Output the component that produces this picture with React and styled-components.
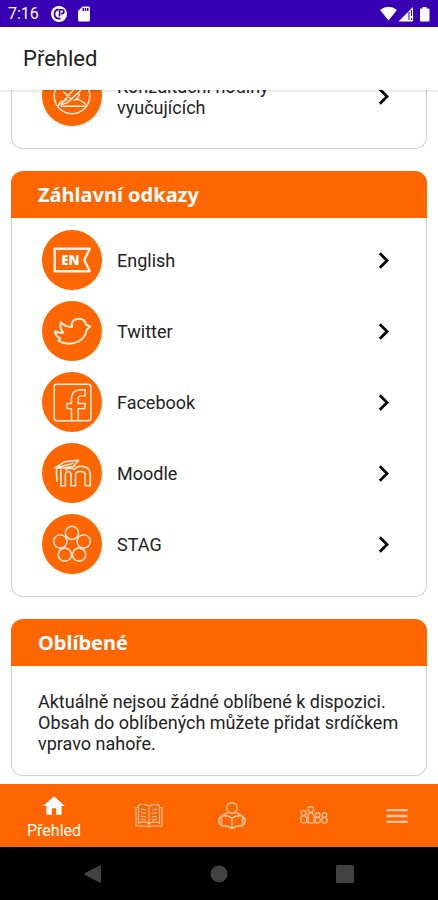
import React, { useState } from 'react';
import styled, { createGlobalStyle } from 'styled-components';

import { MdChevronRight, MdHome, MdSdCard, MdMenu } from 'react-icons/md';

const shortcuts = [
  { id: 'english', label: 'English', Icon: EnglishIcon },
  { id: 'twitter', label: 'Twitter', Icon: TwitterIcon },
  { id: 'facebook', label: 'Facebook', Icon: FacebookIcon },
  { id: 'moodle', label: 'Moodle', Icon: MoodleIcon },
  { id: 'stag', label: 'STAG', Icon: StagIcon },
];

const tabs = [
  { id: 'home', label: 'Přehled', Icon: HomeIcon },
  { id: 'book', Icon: BookIcon },
  { id: 'reader', Icon: ReaderIcon },
  { id: 'people', Icon: PeopleIcon },
  { id: 'menu', Icon: MenuIcon },
];

const LinkRow = ({ id, label, Icon }) => (
  <li>
    <StyledLink href={`#${id}`}>
      <StyledCircle>
        <Icon />
      </StyledCircle>
      <StyledLinkLabel>{label}</StyledLinkLabel>
      <StyledChevron />
    </StyledLink>
  </li>
);

const App = () => {
  const [active, setActive] = useState('home');

  return (
    <StyledScreen>
      <GlobalStyle />

      <StyledStatusBar>
        <StyledTime>7:16</StyledTime>
        <svg width='16' height='16' viewBox='0 0 16 16'>
          <circle cx='8' cy='8' r='8' fill='#fff' />
          <path
            d='M7.5 3.4A4.7 4.7 0 0 0 7.5 12.7A4.7 4.7 0 0 0 9.5 12.4'
            fill='none'
            stroke='#3700b3'
            strokeWidth='1.8'
          />
          <path
            d='M8.6 10.5V3.8H11A1.9 1.9 0 0 1 11 7.6H10'
            fill='none'
            stroke='#3700b3'
            strokeWidth='1.6'
          />
        </svg>
        <StyledSdCard />
        <StyledSignals width='50' height='16' viewBox='0 0 50 16'>
          <path d='M0 4Q8.5 -2.5 17 4L8.5 14.5Z' fill='#fff' />
          <path d='M33 1V15.5H18.5Z' fill='#fff' />
          <path d='M29 6V14M31.5 4V10M31.5 12V14' stroke='#3700b3' />
          <path
            d='M42.5 1H46.5V2.5H48.5A1 1 0 0 1 49.5 3.5V14.5A1 1 0 0 1 48.5 15.5H41A1 1 0 0 1 40 14.5V3.5A1 1 0 0 1 41 2.5H42.5Z'
            fill='#fff'
          />
        </StyledSignals>
      </StyledStatusBar>

      <StyledAppBar>
        <h1>Přehled</h1>
      </StyledAppBar>

      {/* reversed column, so the list opens scrolled to its end */}
      <StyledScroll>
        <StyledContent>
          <section>
            <StyledList>
              <LinkRow
                id='konzultace'
                label='Konzultační hodiny vyučujících'
                Icon={ConsultIcon}
              />
            </StyledList>
          </section>

          <section>
            <StyledCardTitle>Záhlavní odkazy</StyledCardTitle>
            <StyledList>
              {shortcuts.map((item) => (
                <LinkRow key={item.id} {...item} />
              ))}
            </StyledList>
          </section>

          <section>
            <StyledCardTitle>Oblíbené</StyledCardTitle>
            <StyledText>
              Aktuálně nejsou žádné oblíbené k dispozici. Obsah do oblíbených
              můžete přidat srdíčkem vpravo nahoře.
            </StyledText>
          </section>
        </StyledContent>
      </StyledScroll>

      <StyledTabs>
        {tabs.map(({ id, label, Icon }) => (
          <StyledTab
            key={id}
            type='button'
            $wide={id === 'home'}
            $active={id === active}
            onClick={() => setActive(id)}>
            <Icon />
            {label}
          </StyledTab>
        ))}
      </StyledTabs>

      <StyledSystemBar>
        <StyledSystemButton type='button'>
          <svg width='18' height='18' viewBox='0 0 18 18'>
            <path d='M15.5 0.5Q17 0 17 1.5V16.5Q17 18 15.5 17.5L1 10Q0 9 1 8Z' />
          </svg>
        </StyledSystemButton>
        <StyledSystemButton type='button'>
          <svg width='18' height='18' viewBox='0 0 18 18'>
            <circle cx='9' cy='9' r='8.5' />
          </svg>
        </StyledSystemButton>
        <StyledSystemButton type='button'>
          <svg width='18' height='18' viewBox='0 0 18 18'>
            <rect width='18' height='18' rx='1.5' />
          </svg>
        </StyledSystemButton>
      </StyledSystemBar>
    </StyledScreen>
  );
};

/* icons in the orange circles */
function ConsultIcon() {
  return (
    <StyledLineIcon viewBox='0 0 59 59' $weight={1.4}>
      <circle cx='29.5' cy='29.5' r='17.5' />
      <path d='M16 39C18 34 22 34 25 33M34 32C37 34 42 35 43.5 39M18 39.5H42' />
      <path d='M20 36L34 20L38 24L25 36L19 38ZM23 22C25 16 33 16 35 20M21 25L28 32M37 27C36 31 34 33 31 34' />
    </StyledLineIcon>
  );
}

function EnglishIcon() {
  return (
    <StyledLineIcon viewBox='0 0 59 59' $weight={2.4}>
      <path d='M12.5 18.5H47L41.5 29.5L47 40.5H12.5Z' />
      <StyledIconText x='19' y='34.5'>
        EN
      </StyledIconText>
    </StyledLineIcon>
  );
}

function TwitterIcon() {
  return (
    <StyledLineIcon viewBox='0 0 59 59' $weight={1.9}>
      <path d='M47.5 25L43.5 23.5C42.5 19.5 40 17.5 36.5 17.5C31.5 17.5 28.5 20.5 29.5 25.5C26 25.5 21.5 24.5 18.5 21C17.5 24 18 28 21 31C18 31.5 15 31 12.5 30C13 33 15 35.5 18 36.5C17.5 38 16.5 38.5 16 39C25 44.5 38 42 42.5 33C43.5 31 43.8 29.5 44 28Z' />
    </StyledLineIcon>
  );
}

function FacebookIcon() {
  return (
    <StyledLineIcon viewBox='0 0 59 59' $weight={1.4}>
      <rect x='12' y='12' width='36' height='36' rx='2.5' />
      <path d='M29 48V36H24.5V31H29V27C29 21 32 17.5 38 17.5H42.5V23.5H39C36 23.5 35.5 24.5 35.5 27V31H42.5L42 36H35.5V48' />
    </StyledLineIcon>
  );
}

function MoodleIcon() {
  return (
    <StyledLineIcon viewBox='0 0 59 59' $weight={1.5}>
      <path d='M13 24.5L22 18.5L36 17L31 23L21 24.5ZM13 24.5L31 20M14.5 25C13.5 29 15 33 14.5 38' />
      <path d='M18.5 26V42H23V31C23 27 28.5 27 28.5 31V42H33V31C33 27 42.5 27 42.5 31V42H47.5V31C47.5 22 36 21 31.5 26C29 24.5 25 24.5 23 26.5' />
    </StyledLineIcon>
  );
}

function StagIcon() {
  return (
    <StyledLineIcon viewBox='0 0 59 59' $weight={1.4}>
      <circle cx='29.5' cy='18.5' r='6.5' />
      <circle cx='18' cy='27' r='6.5' />
      <circle cx='41' cy='27' r='6.5' />
      <circle cx='22.5' cy='40' r='6.5' />
      <circle cx='36.5' cy='40' r='6.5' />
    </StyledLineIcon>
  );
}

/* icons in the tab bar */
function HomeIcon() {
  return <MdHome size={26} />;
}

function BookIcon() {
  return (
    <StyledTabIcon viewBox='0 0 28 28' $weight={1.1}>
      <path d='M14 4C11 2 6 2 3.5 3.5V21C7 19.5 11 19.5 14 21.5C17 19.5 21 19.5 24.5 21V3.5C22 2 17 2 14 4ZM14 4V24' />
      <path d='M3.5 5.5H1V24H12L14 25L16 24H27V5.5H24.5' />
      <path d='M6 7L11 8M6 10.5L11 11.5M6 14L11 15M6 17L11 18M22 7L17 8M22 10.5L17 11.5M22 14L17 15M22 17L17 18' />
    </StyledTabIcon>
  );
}

function ReaderIcon() {
  return (
    <StyledTabIcon viewBox='0 0 28 28' $weight={1.4}>
      <circle cx='14' cy='6' r='5.2' />
      <path d='M14 16C11 14 6 13.5 3.5 14V24C7 23.5 11 24 14 26.5C17 24 21 23.5 24.5 24V14C22 13.5 17 14 14 16ZM14 16V26' />
      <path d='M3.5 15C0 16 0 22 3.5 23M24.5 15C28 16 28 22 24.5 23M4.5 14C5.5 11.5 8 12 10 10.5M23.5 14C22.5 11.5 20 12 18 10.5' />
    </StyledTabIcon>
  );
}

function PeopleIcon() {
  return (
    <StyledTabIcon viewBox='0 0 28 28' $weight={1.2}>
      <circle cx='3.6' cy='11' r='2.6' />
      <rect x='0.8' y='14' width='5.8' height='7' rx='2.2' />
      <circle cx='10.8' cy='7.5' r='2.8' />
      <path d='M8 21V14C8 10 13.8 10 13.8 14V21Z' />
      <circle cx='17.6' cy='13' r='2.3' />
      <rect x='15.2' y='15.5' width='5' height='5.5' rx='2' />
      <circle cx='24.4' cy='13' r='2.3' />
      <rect x='22' y='15.5' width='5' height='5.5' rx='2' />
    </StyledTabIcon>
  );
}

function MenuIcon() {
  return <MdMenu size={28} />;
}

const GlobalStyle = createGlobalStyle`
  * {
    box-sizing: border-box;
  }
  body {
    margin: 0;
    background: #fff;
    color: #222;
    font-family: Roboto, sans-serif;
  }
  button {
    padding: 0;
    border: 0;
    background: none;
    font: inherit;
    cursor: pointer;
  }
`;

const StyledScreen = styled.div`
  display: flex;
  flex-direction: column;
  height: 100vh;
`;
const StyledStatusBar = styled.div`
  display: flex;
  align-items: center;
  flex: none;
  height: 27px;
  padding: 0 8px;
  background: #3700b3;
  color: #fff;
`;
const StyledTime = styled.span`
  margin-right: 12px;
  font-size: 16px;
`;
const StyledSdCard = styled(MdSdCard)`
  width: 18px;
  height: 18px;
  margin-left: 8px;
`;
const StyledSignals = styled.svg`
  margin-left: auto;
`;
const StyledAppBar = styled.header`
  position: relative;
  z-index: 1;
  display: flex;
  align-items: center;
  flex: none;
  height: 63px;
  padding: 0 23px;
  background: #fff;
  box-shadow: 0 1px 3px rgba(0, 0, 0, 0.15);

  h1 {
    margin: 0;
    font-size: 22px;
    font-weight: 400;
  }
`;
const StyledScroll = styled.main`
  display: flex;
  flex-direction: column-reverse;
  flex: 1;
  min-height: 0;
  overflow-y: auto;
  scrollbar-width: none;
`;
const StyledContent = styled.div`
  display: flex;
  flex-direction: column;
  gap: 22px;
  padding: 8px 11px;
`;
const StyledCardTitle = styled.h2`
  margin: 0;
  padding: 0 27px;
  border-radius: 12px 12px 0 0;
  background: #ff6600;
  color: #fff;
  font-family: 'Noto Sans', sans-serif;
  font-size: 20px;
  font-weight: 700;
  line-height: 47px;
`;
const StyledList = styled.ul`
  display: flex;
  flex-direction: column;
  gap: 11px;
  margin: 0;
  padding: 12px 26px 22px 30px;
  border: 1px solid #d2d2d2;
  border-top: 0;
  border-radius: 0 0 12px 12px;
  list-style-type: none;
`;
const StyledLink = styled.a`
  display: flex;
  align-items: center;
  gap: 15px;
  color: inherit;
  text-decoration: none;
`;
const StyledCircle = styled.span`
  flex: none;
  width: 60px;
  height: 60px;
  border-radius: 50%;
  background: #ff6600;
`;
const StyledLinkLabel = styled.span`
  flex: 1;
  padding-top: 1px;
  font-size: 18px;
  line-height: 21px;
`;
const StyledChevron = styled(MdChevronRight)`
  flex: none;
  width: 33px;
  height: 33px;
  color: #000;
`;
const StyledText = styled.p`
  margin: 0;
  padding: 25px 26px 21px;
  border: 1px solid #d2d2d2;
  border-top: 0;
  border-radius: 0 0 12px 12px;
  font-size: 18px;
  line-height: 21px;
`;
const StyledLineIcon = styled.svg`
  display: block;
  fill: none;
  stroke: #ffefe5;
  stroke-width: ${({ $weight }) => $weight};
  stroke-linejoin: round;
`;
const StyledIconText = styled.text`
  fill: #fff;
  stroke: none;
  font-family: 'Open Sans', sans-serif;
  font-size: 13px;
  font-weight: 800;
`;
const StyledTabs = styled.nav`
  display: flex;
  flex: none;
  height: 63px;
  background: #ff6600;
`;
const StyledTab = styled.button`
  display: flex;
  flex-direction: column;
  align-items: center;
  justify-content: center;
  gap: 2px;
  flex: ${({ $wide }) => ($wide ? '0 0 108px' : '1')};
  padding-top: ${({ $wide }) => ($wide ? '2px' : '0')};
  color: ${({ $active }) => ($active ? '#fff' : '#ffc8a3')};
  font-size: 16px;
  line-height: 20px;
`;
const StyledTabIcon = styled.svg`
  width: 28px;
  height: 28px;
  fill: none;
  stroke: currentColor;
  stroke-width: ${({ $weight }) => $weight};
`;
const StyledSystemBar = styled.div`
  display: flex;
  flex: none;
  height: 53px;
  padding: 0 30px;
  background: #000;
`;
const StyledSystemButton = styled.button`
  display: flex;
  align-items: center;
  justify-content: center;
  flex: 1;
  fill: #424242;
`;

export default App;
